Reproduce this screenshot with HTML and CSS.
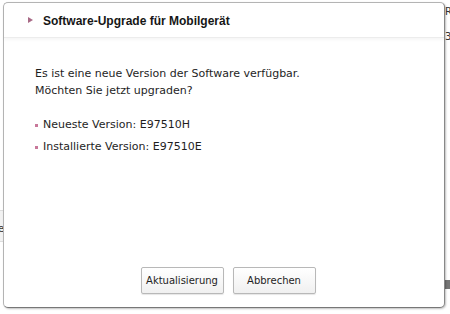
FILE: index.html
```html
<!DOCTYPE html>
<html lang="de">
<head>
  <meta charset="UTF-8">
  <title>Software-Upgrade</title>
  <link rel="stylesheet" href="styles.css">
</head>
<body>
  <div class="backdrop">
    <span class="bg-text bg-r">R</span>
    <span class="bg-text bg-3">3</span>
    <span class="bg-strip"></span>
    <span class="bg-text bg-e">e</span>
    <span class="bg-block"></span>
  </div>

  <div class="dialog">
    <header class="dialog-head">
      <span class="arrow"></span>
      <h1>Software-Upgrade für Mobilgerät</h1>
    </header>

    <main class="dialog-body">
      <p class="intro">Es ist eine neue Version der Software verfügbar.<br>Möchten Sie jetzt upgraden?</p>
      <ul class="versions">
        <li>Neueste Version: E97510H</li>
        <li>Installierte Version: E97510E</li>
      </ul>
    </main>

    <footer class="dialog-foot">
      <button class="btn">Aktualisierung</button>
      <button class="btn">Abbrechen</button>
    </footer>
  </div>
</body>
</html>
```

FILE: styles.css
```css
* {
  margin: 0;
  padding: 0;
  box-sizing: border-box;
}

body {
  width: 450px;
  height: 314px;
  background: #fff;
  font-family: 'DejaVu Sans', sans-serif;
  color: #222;
  overflow: hidden;
  position: relative;
}

/* Page behind the dialog */
.bg-text {
  position: absolute;
  font-size: 10px;
  color: #333;
}

.bg-r { left: 445px; top: 6px; }
.bg-3 { left: 445px; top: 31px; }
.bg-e { left: -2px; top: 223px; }

.bg-strip {
  position: absolute;
  left: 0;
  top: 210px;
  width: 6px;
  height: 32px;
  background: #f2f2f2;
  border-top: 1px solid #ddd;
  border-bottom: 1px solid #ddd;
}

.bg-block {
  position: absolute;
  left: 444px;
  top: 280px;
  width: 6px;
  height: 9px;
  background: #777;
}

/* Dialog */
.dialog {
  position: absolute;
  left: 3px;
  top: 2px;
  width: 442px;
  height: 306px;
  background: #fff;
  border: 1px solid #b4b4b4;
  border-right-color: #888;
  border-bottom-color: #777;
  border-radius: 5px;
  box-shadow: 1px 1px 2px rgba(0, 0, 0, 0.25);
  display: flex;
  flex-direction: column;
}

.dialog-head {
  height: 35px;
  display: flex;
  align-items: center;
  padding-left: 24px;
  gap: 10px;
  border-bottom: 1px solid #ececec;
  box-shadow: 0 2px 3px rgba(0, 0, 0, 0.04);
}

.arrow {
  width: 0;
  height: 0;
  border-top: 3px solid transparent;
  border-bottom: 3px solid transparent;
  border-left: 5px solid #a86a86;
}

.dialog-head h1 {
  font-family: 'Liberation Sans', sans-serif;
  font-size: 12px;
  font-weight: bold;
  color: #161616;
  padding-top: 1px;
}

.dialog-body {
  flex: 1;
  padding: 27px 0 0 31px;
  font-size: 11px;
  color: #1e1e1e;
}

.intro {
  line-height: 17px;
}

.versions {
  list-style: none;
  margin-top: 15px;
}

.versions li {
  line-height: 22px;
  display: flex;
  align-items: center;
  gap: 5px;
}

.versions li::before {
  content: "";
  width: 3px;
  height: 3px;
  background: #c8789a;
}

.dialog-foot {
  display: flex;
  justify-content: center;
  gap: 9px;
  padding: 0 0 13px 8px;
}

.btn {
  width: 83px;
  height: 27px;
  font-family: 'DejaVu Sans', sans-serif;
  font-size: 10px;
  color: #1e1e1e;
  background: linear-gradient(to bottom, #ffffff, #f0f0f0);
  border: 1px solid #b8b8b8;
  border-radius: 2px;
  box-shadow: 0 1px 1px rgba(0, 0, 0, 0.1);
}
```
